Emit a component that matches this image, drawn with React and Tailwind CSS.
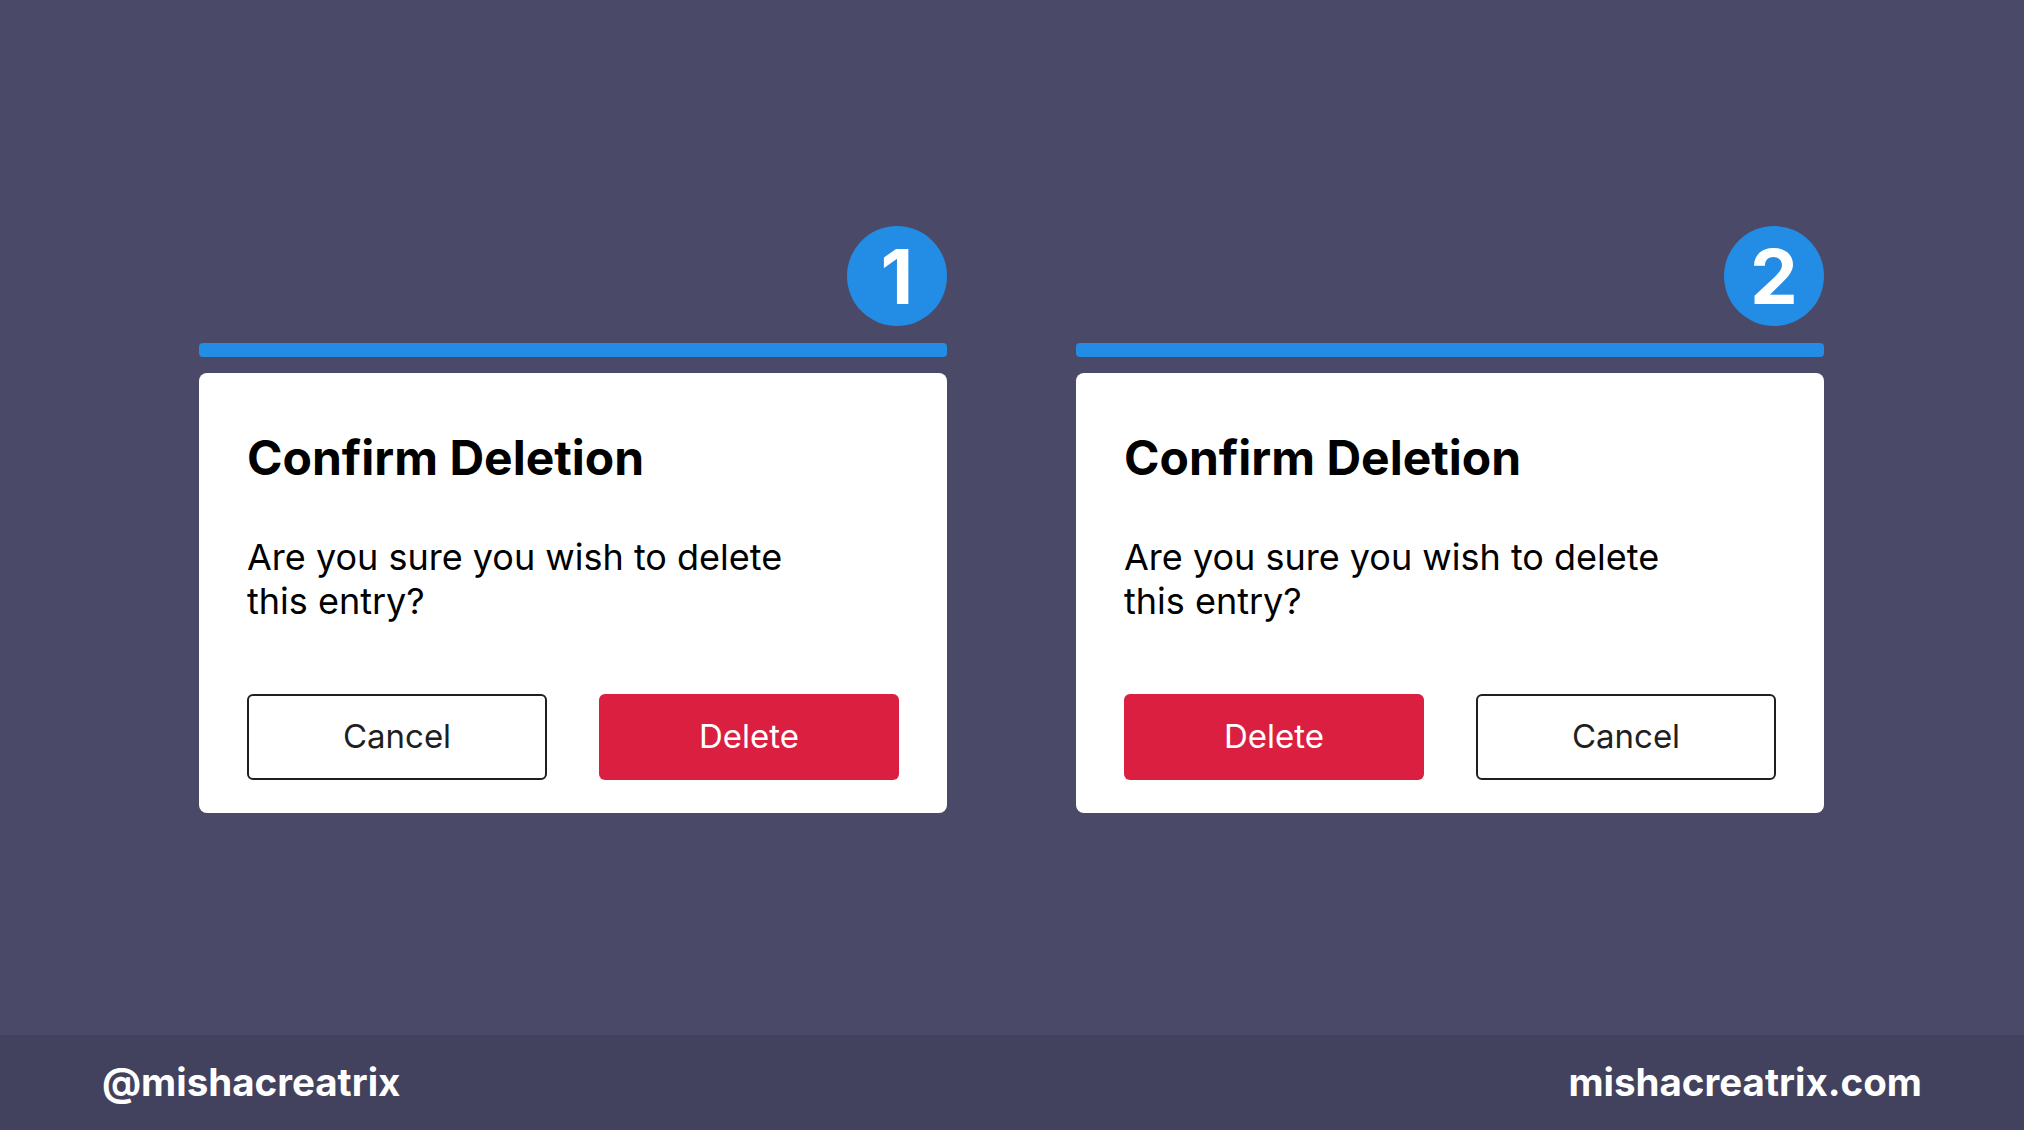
const Dialog = ({number, deleteFirst}) => {
    const cancelBtn = (
        <button className="h-[86px] rounded-[6px] border-2 border-[#1f1f1f] bg-white text-[33px] text-[#1f1f1f]">
            Cancel
        </button>
    );
    const deleteBtn = (
        <button className="h-[86px] rounded-[6px] bg-[#db1f41] text-[33px] text-white">
            Delete
        </button>
    );

    return (
        <div className="w-[748px] flex flex-col">
            <div className="self-end w-[100px] h-[100px] rounded-full bg-[#238ce4] flex items-center justify-center text-white text-[76px] font-bold leading-none">
                {number}
            </div>
            <div className="mt-[17px] h-[14px] w-full rounded-[4px] bg-[#238ce4]" />
            <div className="mt-[16px] h-[440px] bg-white rounded-[8px] px-[48px] pt-[56px]">
                <h2 className="text-[48px] leading-[58px] font-bold text-black">
                    Confirm Deletion
                </h2>
                <p className="mt-[48px] max-w-[560px] text-[36px] leading-[44px] text-black">
                    Are you sure you wish to delete this entry?
                </p>
                <div className="mt-[71px] grid grid-cols-2 gap-[52px]">
                    {deleteFirst ? deleteBtn : cancelBtn}
                    {deleteFirst ? cancelBtn : deleteBtn}
                </div>
            </div>
        </div>
    );
};

export default function App() {
    return (
        <div className="w-full h-[1130px] flex flex-col bg-[#4a4a68] font-['Inter',sans-serif]">
            <main className="flex-1 flex gap-[129px] pl-[199px] pt-[226px]">
                <Dialog number="1" />
                <Dialog number="2" deleteFirst />
            </main>
            <footer className="h-[95px] bg-[#42415e] flex items-center justify-between px-[102px] text-white text-[38.5px] font-bold">
                <span>@mishacreatrix</span>
                <span>mishacreatrix.com</span>
            </footer>
        </div>
    );
}
